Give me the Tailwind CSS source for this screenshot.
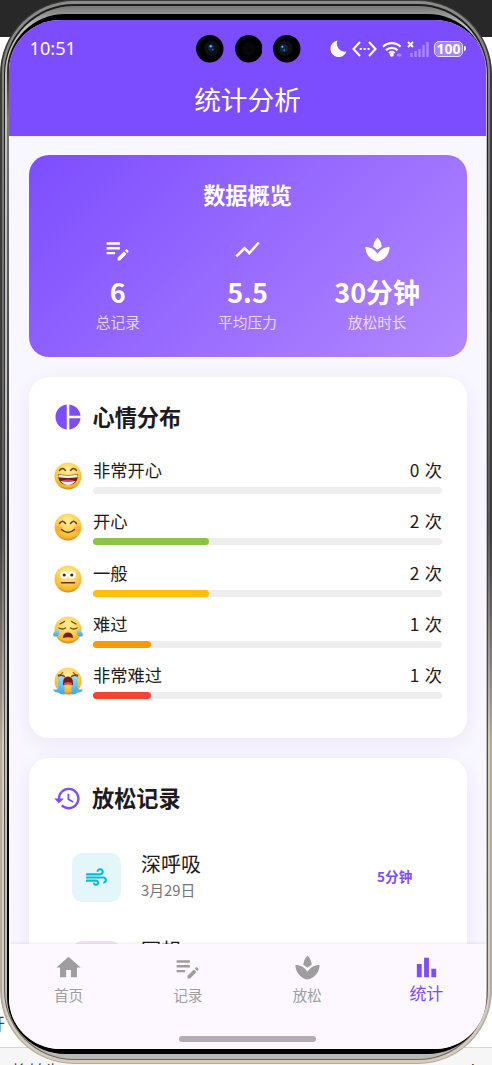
<!DOCTYPE html>
<html lang="zh-CN">
<head>
<meta charset="utf-8">
<title>统计分析</title>
<script src="https://cdn.jsdelivr.net/npm/@tailwindcss/browser@4"></script>
</head>
<body class="w-[492px] h-[1065px] overflow-hidden bg-white font-['Noto_Sans_CJK_SC',sans-serif]">
<svg class="absolute w-0 h-0" aria-hidden="true">
  <defs>
    <radialGradient id="face" cx=".5" cy=".3" r=".7"><stop offset="0" stop-color="#fff0a0"/><stop offset=".5" stop-color="#fcd458"/><stop offset=".85" stop-color="#f7b52a"/><stop offset="1" stop-color="#d98216"/></radialGradient>
    <linearGradient id="tear" x1="0" y1="0" x2="0" y2="1"><stop offset="0" stop-color="#9bdcf8"/><stop offset="1" stop-color="#3ba6e6"/></linearGradient>
    <symbol id="note" viewBox="0 0 24 24"><path d="M3 10h11v2H3v-2zm0-2h11V6H3v2zm0 8h7v-2H3v2zm15.01-3.13.71-.71c.39-.39 1.02-.39 1.41 0l.71.71c.39.39.39 1.02 0 1.41l-.71.71-2.12-2.12zm-.71.71-5.3 5.3V21h2.12l5.3-5.3-2.12-2.12z"/></symbol>
    <symbol id="spa" viewBox="0 0 24 24"><path d="M15.49 9.63c-.18-2.79-1.31-5.51-3.43-7.63-2.14 2.14-3.32 4.86-3.55 7.63 1.28.68 2.46 1.56 3.49 2.63 1.03-1.06 2.21-1.94 3.49-2.63zM12 15.45C9.85 12.17 6.18 10 2 10c0 5.32 3.36 9.82 8.03 11.49.63.23 1.29.4 1.97.51.68-.12 1.33-.29 1.97-.51C18.64 19.82 22 15.32 22 10c-4.18 0-7.85 2.17-10 5.45z"/></symbol>
  </defs>
</svg>
<div class="relative w-[492px] h-[1065px] overflow-hidden">
  <!-- desktop behind the device -->
  <div class="absolute inset-0 flex flex-col">
    <div class="h-[37px] shrink-0 bg-[#282828]"></div>
    <div class="h-[1010px] shrink-0 bg-white flex items-end text-[17px] leading-[17px] pb-4 text-[#444]"><span class="-ml-[12px]">开</span></div>
    <div class="h-[18px] shrink-0 border-t border-[#d5d5d5] bg-[#f6f6f6] flex justify-between overflow-hidden pt-[14px] px-[11px] text-[17px] leading-[17px] text-[#444]"><span>将转为</span><span>Tab</span></div>
  </div>
  <!-- device rim -->
  <div class="relative w-[492px] h-[1064px] rounded-[74px] bg-linear-to-b from-[#3c3b3a] from-0% via-[#3a3a3b] via-69.7% to-[#b5ab9d] to-70% pt-px pb-px pl-[2px] pr-[2px]">
  <div class="size-full rounded-[72px] bg-linear-to-b from-[#8b8b8b] via-[#5c5a58] via-69.7% to-[#d6ccbe] to-70% pt-[3px] pb-[3px] px-[2px]">
  <div class="size-full rounded-[70px] bg-linear-to-b from-[#1c1c1c] to-[#6b645c] pt-[2px] pb-px px-px">
  <div class="size-full rounded-[69px] bg-linear-to-b from-[#777] via-[#c2c2c0] via-2% to-[#b8b8b6] pt-[8px] pb-[5px] pl-[2px] pr-px">
  <div class="size-full rounded-[58px] bg-linear-to-b from-black via-[#777] via-10% to-black pt-[6px] pl-[2px]">
  <div class="w-[477px] h-[1029px] rounded-[51px] overflow-hidden flex flex-col bg-[#f8f6ff]">
    <header class="h-[115.5px] shrink-0 bg-[#7c4dff] text-white">
      <div class="relative h-[57px] flex items-center justify-between pl-[20.5px] pr-[20px]">
        <span class="font-['Noto_Sans'] text-[18.2px] leading-none">10:51</span>
        <div class="absolute left-[187px] top-[15px] flex gap-[11px]">
          <svg width="27.5" height="27.5" viewBox="0 0 28 28"><circle cx="14" cy="14" r="14" fill="#000"/><circle cx="16" cy="13.5" r="7.5" fill="#0d0f12"/><circle cx="15.5" cy="13" r="3.5" fill="#102742"/><circle cx="15" cy="11.5" r="1.2" fill="#6cb8ef"/><circle cx="17" cy="15" r=".8" fill="#3678b0"/></svg>
          <svg width="27.5" height="27.5" viewBox="0 0 28 28"><circle cx="14" cy="14" r="14" fill="#000"/><circle cx="14" cy="14" r="7" fill="#070707"/></svg>
          <svg width="27.5" height="27.5" viewBox="0 0 28 28"><circle cx="14" cy="14" r="14" fill="#000"/><circle cx="12" cy="13.5" r="8" fill="#0d0f12"/><circle cx="11" cy="13.5" r="4" fill="#102742"/><circle cx="9.5" cy="12" r="1.1" fill="#6cb8ef"/><circle cx="11.500" cy="15.5" r=".9" fill="#3678b0"/></svg>
        </div>
        <div class="flex items-center">
          <svg class="w-[17px] h-[17px]" viewBox="0 0 17 17" fill="#fff"><path d="M7.5.5A8.300 8.300 0 1 0 16.500 11.500 8 8 0 0 1 7.500.5Z"/></svg>
          <svg class="ml-[5px] w-[25px] h-[16px]" viewBox="0 0 25 16" fill="none" stroke="#fff" stroke-width="2.1"><path d="M8 1 1.500 8 8 15M17 1l6.500 7L17 15"/><path d="M7.700 8h10" stroke-dasharray="2.100 1.800"/></svg>
          <svg class="ml-[5px] w-[20px] h-[16px]" viewBox="0 0 20 16" fill="none" stroke="#fff" stroke-width="2.1"><path d="M1 5.700a12.500 12.500 0 0 1 17.600 0M4 9.200a8.500 8.500 0 0 1 11.600 0M7 12a4.500 4.500 0 0 1 5.600 0"/><circle cx="9.800" cy="13.800" r="2" fill="#fff" stroke="none"/><ellipse cx="17" cy="14" rx="2.500" ry="1.500" fill="#a98bff" stroke="none"/></svg>
          <svg class="ml-[5px] w-[22px] h-[16px]" viewBox="0 0 22 16"><path d="m1 1 5 5M6 1 1 6" stroke="#fff" stroke-width="2"/><path d="M4.500 16v-4M8.500 16v-6M12.500 16V8M16.500 16V4M20.500 16V1" stroke="#a98bff" stroke-width="2.400"/></svg>
          <div class="ml-[5px] w-[29px] h-[16px] rounded-[5px] border-[1.5px] border-[#e7dfff] bg-[#a385ff] flex items-center justify-center font-['Noto_Sans'] font-bold text-[14px] leading-none">100</div>
          <div class="ml-px w-[2px] h-[5px] rounded-r bg-white"></div>
        </div>
      </div>
      <h1 class="text-center text-[26.7px] leading-[44px]">统计分析</h1>
    </header>

    <main class="h-[808.5px] shrink-0 overflow-hidden px-[19.5px] pt-[18.5px] flex flex-col gap-[20px] border-t border-[#e4dcff]/40">
      <section class="h-[202px] shrink-0 rounded-[20px] bg-linear-[135deg] from-[#7c4dff] to-[#b388ff] text-white px-[24.5px] pt-[22.5px]">
        <h2 class="text-center font-bold text-[22.2px] leading-[32px]">数据概览</h2>
        <div class="grid grid-cols-3 mt-[25px] text-center">
          <div class="flex flex-col items-center"><svg class="size-[29px] fill-white"><use href="#note"/></svg><b class="mt-[9px] text-[27px] leading-[38px]">6</b><span class="mt-[1px] text-[14.7px] leading-[20px] text-white/75">总记录</span></div>
          <div class="flex flex-col items-center"><svg class="size-[29px] fill-white" viewBox="0 0 24 24"><path d="m3.500 18.490 6-6.010 4 4L22 6.920l-1.410-1.410-7.090 7.970-4-4L2 16.990z"/></svg><b class="mt-[9px] text-[27px] leading-[38px]">5.5</b><span class="mt-[1px] text-[14.7px] leading-[20px] text-white/75">平均压力</span></div>
          <div class="flex flex-col items-center"><svg class="size-[29px] fill-white"><use href="#spa"/></svg><b class="mt-[9px] text-[27px] leading-[38px]">30分钟</b><span class="mt-[1px] text-[14.7px] leading-[20px] text-white/75">放松时长</span></div>
        </div>
      </section>

      <section class="h-[361px] shrink-0 rounded-[20px] bg-white shadow-[0_5px_22px_rgba(60,40,120,0.06)] px-[24.5px] pt-[24px] text-[#1d1b20]">
        <h2 class="h-[32px] flex items-center gap-[9.5px] font-bold text-[22.2px] leading-[32px]"><svg class="size-[30px] fill-[#7c4dff]" viewBox="0 0 24 24"><path d="M11 2v20c-5.070-.5-9-4.790-9-10s3.930-9.500 9-10zm2.030 0v8.990H22c-.47-4.740-4.240-8.520-8.970-8.990zm0 11.010V22c4.740-.47 8.500-4.250 8.970-8.990h-8.970z"/></svg><span class="pb-[3px]">心情分布</span></h2>
        <div class="mt-[24px] flex flex-col text-[17.3px]">
          <div class="h-[51.3px] flex gap-[10px]">
            <svg class="mt-[4px] size-[30px]" viewBox="0 0 30 30"><circle cx="15" cy="15" r="13.5" fill="url(#face)"/><path d="M6.500 9.500q3-4 6 0M17.500 9.500q3-4 6 0" stroke="#70401b" stroke-width="1.400" fill="none" stroke-linecap="round"/><path d="M5 13q10 2 20 0 0 11-10 11T5 13Z" fill="#6d1a23"/><path d="M5.500 13.500q9.500 1.800 19 0v2.700q-9.500 1.500-19 0ZM7.500 20h15q-3 4-7.500 4t-7.500-4Z" fill="#eef0f2"/><path d="M8 20q7-3 14 0-7 2-14 0Z" fill="#d6454e"/></svg>
            <div class="flex-1"><div class="flex justify-between leading-[25px] [word-spacing:1.5px]"><span>非常开心</span><span>0 次</span></div><div class="mt-[5px] h-[7px] rounded-full bg-[#eee]"></div></div>
          </div>
          <div class="h-[51.3px] flex gap-[10px]">
            <svg class="mt-[4px] size-[30px]" viewBox="0 0 30 30"><circle cx="15" cy="15" r="13.5" fill="url(#face)"/><circle cx="6" cy="17" r="3.500" fill="#ff8a3d" opacity=".4"/><circle cx="24" cy="17" r="3.500" fill="#ff8a3d" opacity=".4"/><path d="M6.500 11.500q3-4.500 6 0M17.500 11.500q3-4.500 6 0M8.500 17.500q6.500 6 13 0" stroke="#70401b" stroke-width="1.600" fill="none" stroke-linecap="round"/></svg>
            <div class="flex-1"><div class="flex justify-between leading-[25px] [word-spacing:1.5px]"><span>开心</span><span>2 次</span></div><div class="mt-[5px] h-[7px] rounded-full bg-[#eee]"><div class="h-full w-1/3 rounded-full bg-[#8bc34a]"></div></div></div>
          </div>
          <div class="h-[51.3px] flex gap-[10px]">
            <svg class="mt-[4px] size-[30px]" viewBox="0 0 30 30"><circle cx="15" cy="15" r="13.5" fill="url(#face)"/><circle cx="11" cy="11" r="3.700" fill="#fff"/><circle cx="19" cy="11" r="3.700" fill="#fff"/><circle cx="11.200" cy="11" r="1.600" fill="#50220f"/><circle cx="18.800" cy="11" r="1.600" fill="#50220f"/><path d="M8.500 18.700h13" stroke="#70301b" stroke-width="1.600" stroke-linecap="round"/></svg>
            <div class="flex-1"><div class="flex justify-between leading-[25px] [word-spacing:1.5px]"><span>一般</span><span>2 次</span></div><div class="mt-[5px] h-[7px] rounded-full bg-[#eee]"><div class="h-full w-1/3 rounded-full bg-[#ffc107]"></div></div></div>
          </div>
          <div class="h-[51.3px] flex gap-[10px]">
            <svg class="mt-[4px] size-[30px]" viewBox="0 0 30 30"><circle cx="15" cy="15" r="13.5" fill="url(#face)"/><path d="m7 9 4.500-2.500M23 9l-4.500-2.500M6 13q3.500 2 6.500 0M17.500 13q3.500 2 6.500 0" stroke="#70401b" stroke-width="1.400" fill="none" stroke-linecap="round"/><path d="M10 23q0-5.500 5-5.500t5 5.500q-5-1.500-10 0Z" fill="#751b20"/><path d="M6 14q1 7-3 7.500-4 0-2.500-3.500Q2 15 6 14ZM24 14q-1 7 3 7.500 4 0 2.500-3.500Q28 15 24 14Z" fill="url(#tear)"/></svg>
            <div class="flex-1"><div class="flex justify-between leading-[25px] [word-spacing:1.5px]"><span>难过</span><span>1 次</span></div><div class="mt-[5px] h-[7px] rounded-full bg-[#eee]"><div class="h-full w-1/6 rounded-full bg-[#ff9800]"></div></div></div>
          </div>
          <div class="h-[51.3px] flex gap-[10px]">
            <svg class="mt-[4px] size-[30px]" viewBox="0 0 30 30"><circle cx="15" cy="15" r="13.5" fill="url(#face)"/><path d="M5 9q3 .5 5-3M25 9q-3 .5-5-3" stroke="#a8641c" stroke-width="1.200" fill="none"/><path d="M5 10v13q-2 1-4.500 0 0 4 5 3.500 2 2.500 6 2V10ZM25 10v13q2 1 4.500 0 0 4-5 3.500-2 2.500-6 2V10Z" fill="url(#tear)"/><path d="M5.500 10q3-1.500 6 .5M24.500 10q-3-1.500-6 .5" stroke="#70401b" stroke-width="1.500" fill="none" stroke-linecap="round"/><path d="M10 17q0-6.500 5-6.500t5 6.500v2q-5-1.500-10 0Z" fill="#751b20"/><path d="M11 17q4-2 8 0v1.500q-4-1-8 0Z" fill="#d94b50"/></svg>
            <div class="flex-1"><div class="flex justify-between leading-[25px] [word-spacing:1.5px]"><span>非常难过</span><span>1 次</span></div><div class="mt-[5px] h-[7px] rounded-full bg-[#eee]"><div class="h-full w-1/6 rounded-full bg-[#f44336]"></div></div></div>
          </div>
        </div>
      </section>

      <section class="h-[361px] shrink-0 rounded-[20px] bg-white shadow-[0_5px_22px_rgba(60,40,120,0.06)] px-[24.5px] pt-[24px] text-[#1d1b20]">
        <h2 class="h-[32px] flex items-center gap-[10px] font-bold text-[22.2px] leading-[32px]"><svg class="size-[29px] fill-[#7c4dff]" viewBox="0 0 24 24"><path d="M13 3c-4.970 0-9 4.030-9 9H1l3.890 3.890.07.14L9 12H6c0-3.870 3.130-7 7-7s7 3.130 7 7-3.130 7-7 7c-1.930 0-3.680-.79-4.940-2.060l-1.420 1.420C8.270 19.990 10.510 21 13 21c4.970 0 9-4.030 9-9s-4.030-9-9-9zm-1 5v5l4.280 2.540.72-1.210-3.500-2.080V8H12z"/></svg><span class="pb-[3px]">放松记录</span></h2>
        <div class="mt-[38.5px] flex items-center pl-[19px] pr-[29.5px] h-[49px]">
          <div class="size-[49px] rounded-[10px] bg-[#e3f7fb] flex items-center justify-center"><svg class="size-[25px] fill-[#00bcd4]" viewBox="0 0 24 24"><path d="M14.500 17c0 1.650-1.350 3-3 3s-3-1.350-3-3h2c0 .55.45 1 1 1s1-.45 1-1-.45-1-1-1H2v-2h9.500c1.650 0 3 1.350 3 3zM19 6.500C19 4.570 17.430 3 15.500 3S12 4.570 12 6.500h2c0-.83.67-1.500 1.500-1.500s1.500.67 1.500 1.500S16.330 8 15.500 8H2v2h13.500c1.930 0 3.500-1.570 3.500-3.500zm-.5 4.500H2v2h16.500c.83 0 1.500.67 1.500 1.500s-.67 1.500-1.500 1.500v2c1.930 0 3.500-1.570 3.500-3.500S20.430 11 18.500 11z"/></svg></div>
          <div class="ml-[20px] flex-1 pb-[4px]"><div class="text-[20px] leading-[29px]">深呼吸</div><div class="mt-[1.5px] text-[14.8px] leading-[22px] text-[#757575]">3月29日</div></div>
          <b class="text-[13.5px] tracking-[.2px] pb-px text-[#7c4dff]">5分钟</b>
        </div>
        <div class="mt-[39px] flex items-center pl-[19px] pr-[29px] h-[49px]">
          <div class="size-[49px] rounded-[10px] bg-[#f1e5f6]"></div>
          <div class="ml-[20px] flex-1 pb-[31px]"><div class="text-[20px] leading-[29px]">冥想</div></div>
        </div>
      </section>
    </main>

    <nav class="relative flex-1 bg-[#fdf7ff] shadow-[0_-1px_3px_rgba(0,0,0,0.08)] flex flex-col items-center justify-between pb-[7.5px]">
      <div class="w-full grid grid-cols-4 pt-[9px] text-[14.7px] leading-[22px] text-[#9e9e9e]">
        <div class="flex flex-col items-center gap-[2px]"><svg class="size-[29px] fill-[#9e9e9e]" viewBox="0 0 24 24"><path d="M10 20v-6h4v6h5v-8h3L12 3 2 12h3v8z"/></svg>首页</div>
        <div class="flex flex-col items-center gap-[2px]"><svg class="size-[29px] fill-[#9e9e9e]"><use href="#note"/></svg>记录</div>
        <div class="flex flex-col items-center gap-[2px]"><svg class="size-[29px] fill-[#9e9e9e]"><use href="#spa"/></svg>放松</div>
        <div class="flex flex-col items-center text-[17px] text-[#7c4dff]"><svg class="size-[29px] fill-[#7c4dff]" viewBox="0 0 24 24"><path d="M4 9h4v11H4zm12 4h4v7h-4zm-6-9h4v16h-4z"/></svg>统计</div>
      </div>
      <div class="w-[137px] h-[6px] rounded-full bg-[#b4acb5]"></div>
    </nav>
  </div></div></div></div></div></div>
</div>
</body>
</html>
